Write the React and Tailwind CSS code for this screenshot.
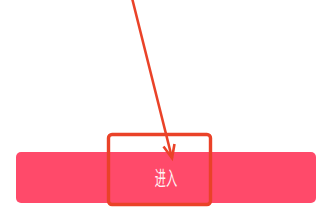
export default function App() {
  return (
    <div className="relative w-[320px] h-[220px] bg-white overflow-hidden" style={{ fontFamily: '"Noto Sans CJK SC", "Noto Sans", sans-serif' }}>
      <div className="pt-[152px] pl-4">
        <button className="w-[300px] h-[51px] rounded-[5px] bg-[#ff4a6a] flex items-center justify-center">
          <span className="inline-block text-[20px] leading-none text-[#fff4f6] scale-x-[0.56]">进入</span>
        </button>
      </div>
      <svg className="absolute left-0 top-0" width="320" height="220" viewBox="0 0 320 220">
        <line x1="132" y1="-2" x2="172" y2="158" stroke="#ea4228" strokeWidth="2.6" />
        <polyline points="163.5,146.5 172,158 174.5,144" fill="none" stroke="#ea4228" strokeWidth="2.6" strokeLinejoin="miter" />
        <rect x="108.5" y="134.5" width="102" height="70" rx="3.5" fill="none" stroke="#ea4228" strokeWidth="3.4" />
      </svg>
    </div>
  );
}
